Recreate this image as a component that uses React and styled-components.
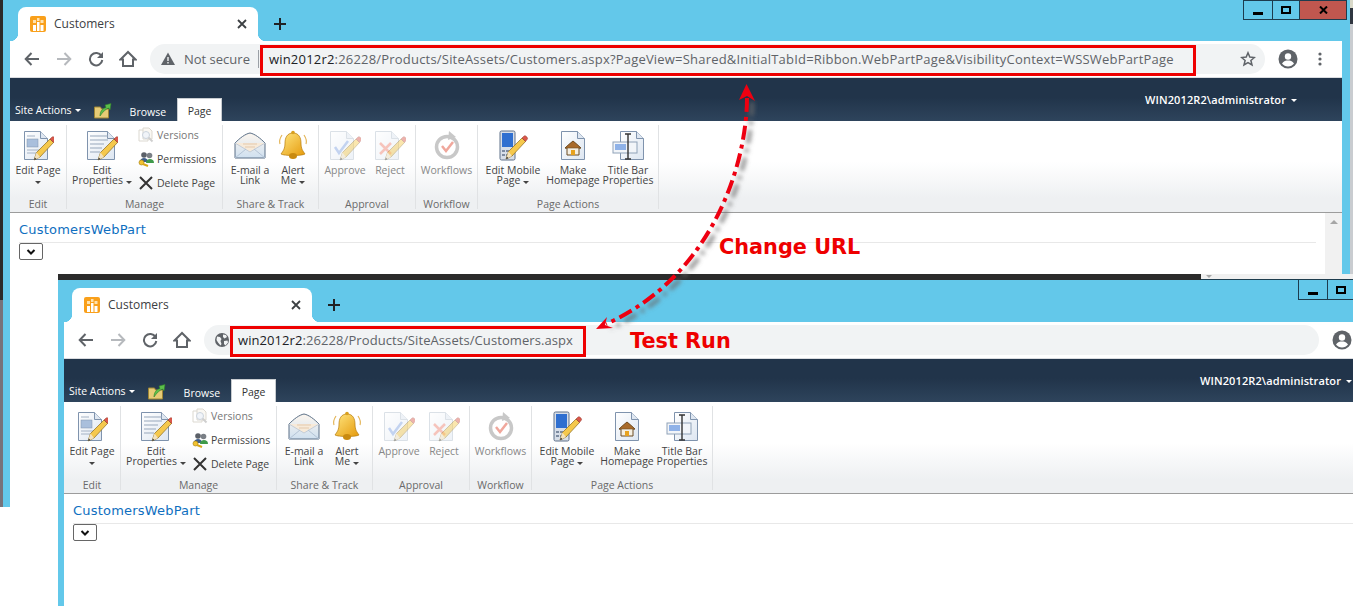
import React from 'react';
import styled, { createGlobalStyle } from 'styled-components';

const SKY = '#63c8ea';
const UI_FONT = '"Open Sans", "Noto Sans", sans-serif';

const GlobalStyle = createGlobalStyle`
  html, body {
    margin: 0;
    padding: 0;
    background: #fff;
    overflow: hidden;
  }
`;

// Desktop and windows.
const Desktop = styled.div`
  position: relative;
  width: 1353px;
  height: 614px;
  overflow: hidden;
  background: #fff;
  font-family: ${UI_FONT};
`;

const LeftEdge = styled.div`
  position: absolute;
  left: 0;
  top: 0;
  width: 3px;
  height: 507px;
  background: linear-gradient(#2b2b2b 0 300px, #77727a 300px);
`;

const RightEdge = styled.div`
  position: absolute;
  left: 1350px;
  top: 0;
  width: 3px;
  height: 274px;
  background: linear-gradient(#d8d8c8 0 8px, #2f3640 8px 24px, #c9ccd0 24px);
`;

const Window = styled.section`
  position: absolute;
  left: ${(p) => p.$left}px;
  top: ${(p) => p.$top}px;
  width: 1347px;
  height: ${(p) => p.$height}px;
  box-sizing: border-box;
  overflow: hidden;
  background: ${SKY};
  padding: 0 8px 0 ${(p) => p.$edge}px;
  display: flex;
  flex-direction: column;
`;

const TopEdge = styled.div`
  flex: none;
  height: 6px;
  margin: 0 -8px 0 -6px;
  display: flex;
`;

const DarkEdge = styled.div`
  width: 1143px;
  background: #2b2b2b;
`;

const PaleEdge = styled.div`
  flex: 1;
  background: #f0f0f0;
  border-bottom: 1px solid #1d3c4e;
  box-sizing: border-box;
  padding: 1px 0 0 5px;
`;

const EdgeArrow = styled.i`
  display: block;
  width: 0;
  height: 0;
  border: 3px solid transparent;
  border-top: 3px solid #a8a8a8;
  border-bottom: 0;
`;

const Controls = styled.div`
  position: absolute;
  left: 1240px;
  top: ${(p) => p.$top}px;
  display: flex;
  height: 20px;
  box-sizing: border-box;
  border: 1px solid #1d3c4e;
  border-top-width: ${(p) => (p.$top ? 0 : 1)}px;
`;

const ControlButton = styled.div`
  width: ${(p) => p.$w}px;
  display: flex;
  align-items: center;
  justify-content: center;
  background: ${(p) => (p.$close ? '#c0574f' : SKY)};
  & + & {
    border-left: 1px solid #1d3c4e;
  }
`;

// Chrome tab strip.
const TabStrip = styled.div`
  flex: none;
  height: ${(p) => p.$height}px;
  display: flex;
  align-items: flex-end;
  padding-left: 8px;
`;

const Tab = styled.div`
  position: relative;
  width: 240px;
  height: 34px;
  box-sizing: border-box;
  padding: 0 11px 0 12px;
  background: #fff;
  border-radius: 8px 8px 0 0;
  display: flex;
  align-items: center;
  gap: 8px;
  &::before,
  &::after {
    content: '';
    position: absolute;
    bottom: 0;
    width: 8px;
    height: 8px;
  }
  &::before {
    left: -8px;
    background: radial-gradient(circle at 0 0, transparent 8px, #fff 8.5px);
  }
  &::after {
    right: -8px;
    background: radial-gradient(circle at 100% 0, transparent 8px, #fff 8.5px);
  }
`;

const TabTitle = styled.span`
  flex: 1;
  font-size: 12px;
  line-height: 15px;
  margin-top: -1px;
  color: #3c4043;
`;

const NewTab = styled.div`
  width: 20px;
  height: 34px;
  margin-left: 12px;
  display: flex;
  align-items: center;
  justify-content: center;
`;

// Address bar.
const Toolbar = styled.div`
  flex: none;
  height: 37px;
  box-sizing: border-box;
  background: #fff;
  border-bottom: 1px solid #dadce0;
  padding: 3px 0 3px 6px;
  display: flex;
  align-items: flex-start;
`;

const NavButton = styled.div`
  flex: none;
  width: ${(p) => p.$w || 32}px;
  height: 30px;
  display: flex;
  align-items: center;
  justify-content: center;
`;

const Omnibox = styled.div`
  flex: none;
  width: 1115px;
  height: 30px;
  margin-left: 6px;
  box-sizing: border-box;
  border-radius: 15px;
  background: #f1f3f4;
  display: flex;
  align-items: flex-start;
  padding-left: 11px;
`;

const SiteInfo = styled.div`
  flex: none;
  height: 30px;
  display: flex;
  align-items: center;
  gap: 9px;
  font-size: 13px;
  color: #5f6368;
`;

const SiteDivider = styled.span`
  width: 1px;
  height: 18px;
  background: #9aa0a6;
  margin-left: -1px;
`;

const UrlField = styled.div`
  flex: none;
  width: ${(p) => p.$w}px;
  height: 31px;
  margin: 1px 0 0 ${(p) => p.$gap}px;
  box-sizing: border-box;
  border: 3px solid #ee0000;
  padding: 0 0 3px ${(p) => p.$pad}px;
  display: flex;
  align-items: center;
  white-space: nowrap;
  font-size: 13px;
  letter-spacing: ${(p) => p.$track}px;
  color: #5f6368;
  b {
    font-weight: 400;
    color: #202124;
  }
`;

const StarSlot = styled.div`
  margin-left: auto;
  width: 34px;
  height: 30px;
  display: flex;
  align-items: center;
  justify-content: center;
`;

// SharePoint page.
const Band = styled.div`
  flex: none;
  height: 43px;
  background: linear-gradient(#21344a 0 45%, #2e445c);
  display: flex;
  align-items: flex-end;
  padding-left: 5px;
  color: #fff;
`;

const SiteActions = styled.div`
  font-size: 10.5px;
  height: 21px;
  line-height: 20px;
  display: flex;
  gap: 3px;
`;

const FolderSlot = styled.div`
  width: 18px;
  height: 18px;
  margin: 0 0 2px 13px;
`;

const BrowseTab = styled.div`
  margin-left: 18px;
  height: 16px;
  font-size: 10.5px;
  color: #fff;
`;

const PageTab = styled.div`
  width: 45px;
  height: 23px;
  margin-left: 11px;
  box-sizing: border-box;
  border: 1px solid #c8ccd0;
  border-bottom: 0;
  background: #fff;
  color: #333;
  font-size: 10.5px;
  line-height: 25px;
  text-align: center;
`;

const UserMenu = styled.div`
  align-self: flex-start;
  margin: 15px 45px 0 auto;
  font-size: 11px;
  font-weight: 600;
  letter-spacing: 0.1px;
  line-height: 14px;
  display: flex;
  gap: 5px;
`;

const Caret = styled.i`
  display: inline-block;
  flex: none;
  width: 0;
  height: 0;
  align-self: center;
  border: 3px solid transparent;
  border-top: 3px solid ${(p) => p.$color || '#444'};
  border-bottom: 0;
  margin-left: ${(p) => p.$gap || 0}px;
`;

const Ribbon = styled.div`
  flex: none;
  height: 92px;
  box-sizing: border-box;
  background: linear-gradient(#fff 0 45%, #eef0f2 85%);
  border-bottom: 1px solid #9c9c9c;
  display: flex;
`;

const Group = styled.div`
  flex: none;
  width: ${(p) => p.$w}px;
  height: 84px;
  margin-top: 4px;
  box-sizing: border-box;
  border-right: 1px solid #e0e2e4;
  display: flex;
  flex-direction: column;
`;

const GroupBody = styled.div`
  flex: 1;
  display: flex;
`;

const GroupLabel = styled.div`
  height: 12px;
  font-size: 10.5px;
  line-height: 14px;
  text-align: center;
  color: #6a6a6a;
`;

const LargeButton = styled.div`
  flex: none;
  width: ${(p) => p.$w}px;
  box-sizing: border-box;
  padding-top: 5px;
  display: flex;
  flex-direction: column;
  align-items: center;
  color: ${(p) => (p.$off ? '#888' : '#444')};
  font-size: 10.5px;
  line-height: 10px;
  text-align: center;
`;

const ButtonLabel = styled.div`
  margin-top: 3px;
  white-space: nowrap;
`;

const SmallColumn = styled.div`
  flex: 1;
  margin-top: -2px;
  display: flex;
  flex-direction: column;
`;

const SmallButton = styled.div`
  height: 24px;
  display: flex;
  align-items: center;
  gap: 3px;
  padding-left: 1px;
  font-size: 10.5px;
  color: ${(p) => (p.$off ? '#777' : '#444')};
`;

const Content = styled.div`
  flex: 1;
  display: flex;
  min-height: 0;
  background: #fff;
`;

const WebPart = styled.div`
  flex: 1;
  padding: 9px 9px 0;
`;

const WebPartTitle = styled.div`
  font-family: "DejaVu Sans", sans-serif;
  font-size: 13px;
  letter-spacing: 0.2px;
  line-height: 16px;
  height: 20px;
  color: #0f6fc0;
  border-bottom: 1px solid #e8e8e8;
`;

const SelectBox = styled.div`
  width: 24px;
  height: 17px;
  box-sizing: border-box;
  border: 1px solid #666;
  border-radius: 2px;
  display: flex;
  align-items: center;
  justify-content: center;
`;

const Scrollbar = styled.div`
  flex: none;
  width: 17px;
  background: #f1f1f1;
  display: flex;
  justify-content: center;
  padding-top: 7px;
  box-sizing: border-box;
`;

const ScrollArrow = styled.i`
  width: 0;
  height: 0;
  border: 4px solid transparent;
  border-bottom: 4px solid #a6a6a6;
  border-top: 0;
`;

// Annotations drawn on top of the screenshot.
const Overlay = styled.svg`
  position: absolute;
  left: 0;
  top: 0;
  pointer-events: none;
`;

const Callout = styled.div`
  position: absolute;
  left: ${(p) => p.$left}px;
  top: ${(p) => p.$top}px;
  font-family: "DejaVu Sans", sans-serif;
  font-weight: 700;
  font-size: 20.8px;
  line-height: 24px;
  color: #ee0000;
  white-space: nowrap;
`;

// Browser icons.
const Svg = ({ size = 16, children }) => (
  <svg width={size} height={size} viewBox={`0 0 ${size} ${size}`} fill="none">{children}</svg>
);

const Favicon = () => (
  <Svg size={16}>
    <rect width="16" height="16" rx="2" fill="#f9a01b" />
    <path d="M3 9h3v6H3zM7 6h2.500v9H7zM10.500 9h3v6h-3z" fill="#fff" />
    <path d="M3 4h3v3H3zM7 2h2.500v3H7zM10.500 4h3v3h-3z" fill="#ffe2ad" />
  </Svg>
);

const ArrowBack = ({ color = '#5f6368', flip }) => (
  <Svg size={16}>
    <path
      d={flip ? 'M1 8h13M8.500 2l5.800 6-5.800 6' : 'M15 8H2M7.500 2L1.700 8l5.800 6'}
      stroke={color}
      strokeWidth="2"
    />
  </Svg>
);

const Reload = () => (
  <Svg size={16}>
    <path d="M13.500 5A6.200 6.200 0 1 0 14.300 9" stroke="#5f6368" strokeWidth="2" />
    <path d="M15 1v6H9z" fill="#5f6368" />
  </Svg>
);

const HomeIcon = () => (
  <Svg size={18}>
    <path d="M9 2L1.500 9.500H4v6.500h10V9.500h2.500z" stroke="#5f6368" strokeWidth="2" strokeLinejoin="miter" />
  </Svg>
);

const WarningIcon = () => (
  <Svg size={14}>
    <path d="M7 0.500L14 13H0z" fill="#5f6368" />
    <path d="M6.300 5h1.400v4H6.300zM6.300 10h1.400v1.500H6.300z" fill="#f1f3f4" />
  </Svg>
);

const GlobeIcon = () => (
  <Svg size={14}>
    <circle cx="7" cy="7" r="7" fill="#5f6368" />
    <path d="M2 3.500l3 .5 1.500 2-1 2 1 3-1 1.500L3 9.500 1.500 7zM8 1.500l3 .5 1 2-2.500 1.500L8 4zM9 8l3.500-.5.500 2-2.500 3-1.500-1.500z" fill="#f1f3f4" />
  </Svg>
);

const StarIcon = () => (
  <Svg size={16}>
    <path d="M8 1.800l1.800 4.300 4.600.4-3.500 3 1.100 4.500L8 11.600l-4 2.400 1.100-4.500-3.500-3 4.600-.4z" stroke="#5f6368" strokeWidth="1.500" />
  </Svg>
);

const ProfileIcon = () => (
  <Svg size={20}>
    <circle cx="10" cy="10" r="9.500" fill="#5f6368" />
    <circle cx="10" cy="7.500" r="3.200" fill="#fff" />
    <path d="M4 14.500c1.500-2.500 4-3 6-3s4.500.5 6 3c-1.500 2-3.700 3-6 3s-4.500-1-6-3z" fill="#fff" />
  </Svg>
);

const DotsIcon = () => (
  <Svg size={16}>
    <circle cx="8" cy="3" r="1.600" fill="#5f6368" />
    <circle cx="8" cy="8" r="1.600" fill="#5f6368" />
    <circle cx="8" cy="13" r="1.600" fill="#5f6368" />
  </Svg>
);

const CrossIcon = () => (
  <Svg size={10}>
    <path d="M1 1l8 8M9 1L1 9" stroke="#3c4043" strokeWidth="1.800" />
  </Svg>
);

const PlusIcon = () => (
  <Svg size={14}>
    <path d="M7 1v12M1 7h12" stroke="#202124" strokeWidth="2" />
  </Svg>
);

const ChevronIcon = () => (
  <Svg size={10}>
    <path d="M1.500 3L5 6.500 8.500 3" stroke="#111" strokeWidth="2" />
  </Svg>
);

const MinimizeGlyph = () => (
  <svg width="10" height="10" viewBox="0 0 10 10"><rect y="7" width="10" height="3" fill="#000" /></svg>
);

const RestoreGlyph = () => (
  <svg width="10" height="8" viewBox="0 0 10 8"><rect x="1" y="1" width="8" height="6" fill="none" stroke="#000" strokeWidth="2" /></svg>
);

const CloseGlyph = () => (
  <svg width="9" height="8" viewBox="0 0 9 8"><path d="M1 0.500l7 7M8 0.500l-7 7" stroke="#000" strokeWidth="2" /></svg>
);

const FolderIcon = () => (
  <Svg size={18}>
    <path d="M0.500 6h6l1 2h7v9h-14z" fill="#e6cb76" stroke="#9c8435" />
    <path d="M6 15c0-5 2.500-7.500 6-8.500L11 4l6-1.500-1 6.500-1.500-2C12 8 9 10.500 6 15z" fill="#5cc04a" stroke="#2f7f2a" strokeWidth=".6" />
  </Svg>
);

// Ribbon icons.
const Pencil = ({ x = 0, y = 0, faded }) => (
  <g transform={`translate(${x} ${y})`} opacity={faded ? 0.45 : 1}>
    <path d="M3 27l2.500-7.500L19 6l3.500 3.500L9 24z" fill="#f5c84c" stroke="#8a6a1e" strokeWidth=".7" />
    <path d="M19 6l1.500-1.500c1-1 1.800-1 2.600-.2l.9.9c.8.8.8 1.600-.2 2.600L22.500 9.500z" fill="#d9574a" stroke="#8c3027" strokeWidth=".5" />
    <path d="M3 27l2.500-7.500L9 24z" fill="#f3e2bd" />
    <path d="M3 27l.8-2.500 1.700 1.700z" fill="#333" />
  </g>
);

const DocShape = ({ x = 0, w = 24, h = 28, faded }) => (
  <g opacity={faded ? 0.5 : 1}>
    <path
      d={`M${x + 0.5} 1.500h${w - 8}l7 7V${h + 1.500}h-${w - 1}z`}
      fill="url(#docFill)"
      stroke={faded ? '#b9c4d0' : '#7f93ad'}
    />
    <path d={`M${x + w - 7.500} 1.500v7h7`} fill="#dfe7f1" stroke={faded ? '#b9c4d0' : '#7f93ad'} />
  </g>
);

const Frame32 = ({ children }) => (
  <svg width="32" height="32" viewBox="0 0 32 32" fill="none">
    <defs>
      <linearGradient id="docFill" x1="0" y1="0" x2="1" y2="1">
        <stop offset="0" stopColor="#fff" />
        <stop offset="1" stopColor="#dde6f1" />
      </linearGradient>
      <linearGradient id="bellFill" x1="0" y1="0" x2="1" y2="1">
        <stop offset="0" stopColor="#ffe680" />
        <stop offset="1" stopColor="#e59a0c" />
      </linearGradient>
      <linearGradient id="mailFill" x1="0" y1="0" x2="0" y2="1">
        <stop offset="0" stopColor="#fdf6ee" />
        <stop offset="1" stopColor="#cfe0f0" />
      </linearGradient>
    </defs>
    {children}
  </svg>
);

const EditPageIcon = () => (
  <Frame32>
    <DocShape x={2} />
    <rect x="5" y="9" width="11" height="8" fill="#a9bfdc" stroke="#7f93ad" strokeWidth=".5" />
    <path d="M5 20h14M5 23h10M5 6h8" stroke="#a4b2c4" />
    <Pencil x={9} y={3} />
  </Frame32>
);

const EditPropertiesIcon = () => (
  <Frame32>
    <DocShape x={1} w={28} />
    <path d="M4 6h18M4 10h18M4 14h14M4 18h12M4 22h10" stroke="#97a7bb" />
    <Pencil x={9} y={3} />
  </Frame32>
);

const VersionsIcon = () => (
  <Svg size={16}>
    <g opacity=".4">
      <path d="M1 3h6l3 3v8H1z" fill="#fff" stroke="#a9a08c" />
      <path d="M5 1h6l3 3v8H5z" fill="#f5efe2" stroke="#a9a08c" />
      <circle cx="8" cy="8" r="3.500" fill="#dde6f1" stroke="#7f93ad" />
      <path d="M10.500 10.500l4 4" stroke="#888" strokeWidth="2" />
    </g>
  </Svg>
);

const PermissionsIcon = () => (
  <Svg size={16}>
    <circle cx="6" cy="4" r="2.800" fill="#5b6068" />
    <circle cx="11.500" cy="4.500" r="2.800" fill="#7a7f86" />
    <path d="M2 11c0-3 2-4 4-4s4 1 4 4z" fill="#3f5f8c" />
    <path d="M8 12c0-3 2-4 4-4s4 1 4 4z" fill="#3f9a4a" />
    <circle cx="3.500" cy="11.500" r="2.500" fill="#f2c230" stroke="#a07c10" strokeWidth=".6" />
    <path d="M5 13l5 2" stroke="#d9a718" strokeWidth="2" />
  </Svg>
);

const DeleteIcon = () => (
  <Svg size={16}>
    <path d="M2 2l12 12M14 2L2 14" stroke="#333" strokeWidth="2" />
  </Svg>
);

const MailIcon = () => (
  <Frame32>
    <path d="M1 13C6 8 11 4 16 3c5 1 10 5 15 10v15H1z" fill="url(#mailFill)" stroke="#5a6f86" />
    <path d="M1 13l15 9 15-9" fill="#f7ead9" stroke="#c4cdd8" />
    <path d="M1 28l11-9M31 28l-11-9" stroke="#b4c4d6" />
    <path d="M9 14h14M11 17h10" stroke="#e3c9ad" />
  </Frame32>
);

const BellIcon = () => (
  <Frame32>
    <path d="M16 3c-6 0-8 5-8 10 0 6-2 8-4 11 3 2 21 2 24 0-2-3-4-5-4-11 0-5-2-10-8-10z" fill="url(#bellFill)" stroke="#b57a0a" strokeWidth=".7" />
    <ellipse cx="16" cy="26" rx="4" ry="3" fill="#c98a10" />
    <circle cx="16" cy="2.500" r="1.800" fill="#d9a01e" />
    <path d="M5 5C3 8 2 11 3 14M27 5c2 3 3 6 2 9" stroke="#e4b65a" strokeWidth="1.200" />
  </Frame32>
);

const ApproveIcon = () => (
  <Frame32>
    <DocShape x={1} faded />
    <path d="M6 17l4 6 9-12" stroke="#c3d3f0" strokeWidth="2.500" />
    <Pencil x={8} y={3} faded />
  </Frame32>
);

const RejectIcon = () => (
  <Frame32>
    <DocShape x={1} faded />
    <path d="M6 13l11 11M17 13L6 24" stroke="#f6c4bc" strokeWidth="2.500" />
    <Pencil x={8} y={3} faded />
  </Frame32>
);

const WorkflowIcon = () => (
  <Frame32>
    <circle cx="16" cy="17" r="10.500" stroke="#c8c8c8" strokeWidth="3.500" />
    <path d="M18 1l7 6-8 3z" fill="#c8c8c8" />
    <path d="M11 16l4 5 7-9" stroke="#f0a79c" strokeWidth="2.500" />
  </Frame32>
);

const MobileIcon = () => (
  <Frame32>
    <rect x="3" y="1" width="15" height="29" rx="1.500" fill="#d7dee8" stroke="#5f7089" />
    <rect x="5" y="3" width="11" height="14" fill="#2f6fd0" />
    <path d="M5 20h3v2H5zM9 20h3v2H9zM13 20h3v2h-3zM5 24h3v2H5zM9 24h3v2H9zM13 24h3v2h-3z" fill="#7d8ba0" />
    <Pencil x={6} y={2} />
  </Frame32>
);

const HomepageIcon = () => (
  <Frame32>
    <DocShape x={4} />
    <path d="M16 11l-8 7h2v7h12v-7h2z" fill="#f5efe2" stroke="#6a4a22" />
    <path d="M16 11l-8 7h16z" fill="#a86a2a" stroke="#6a4a22" strokeWidth=".6" />
    <rect x="14" y="20" width="4" height="5" fill="#e8a21e" />
  </Frame32>
);

const TitleBarIcon = () => (
  <Frame32>
    <DocShape x={8} />
    <rect x="1" y="12" width="24" height="11" fill="#f2f5f9" stroke="#8fa2b8" />
    <rect x="3" y="14" width="11" height="6" fill="#8fb2e8" />
    <path d="M13 4h6M13 29h6M16 4v25" stroke="#333" strokeWidth="1.400" />
  </Frame32>
);

// Ribbon data.
const groups = [
  {
    label: 'Edit',
    width: 57,
    buttons: [{ Icon: EditPageIcon, width: 56, lines: ['Edit Page'], caretLine: true }],
  },
  {
    label: 'Manage',
    width: 156,
    buttons: [{ Icon: EditPropertiesIcon, width: 70, lines: ['Edit', 'Properties'], caret: true }],
    small: [
      { Icon: VersionsIcon, text: 'Versions', off: true },
      { Icon: PermissionsIcon, text: 'Permissions' },
      { Icon: DeleteIcon, text: 'Delete Page' },
    ],
  },
  {
    label: 'Share & Track',
    width: 96,
    buttons: [
      { Icon: MailIcon, width: 54, lines: ['E-mail a', 'Link'] },
      { Icon: BellIcon, width: 32, lines: ['Alert', 'Me'], caret: true },
    ],
  },
  {
    label: 'Approval',
    width: 97,
    buttons: [
      { Icon: ApproveIcon, width: 52, lines: ['Approve'], off: true },
      { Icon: RejectIcon, width: 38, lines: ['Reject'], off: true },
    ],
  },
  {
    label: 'Workflow',
    width: 62,
    buttons: [{ Icon: WorkflowIcon, width: 61, lines: ['Workflows'], off: true }],
  },
  {
    label: 'Page Actions',
    width: 181,
    buttons: [
      { Icon: MobileIcon, width: 70, lines: ['Edit Mobile', 'Page'], caret: true },
      { Icon: HomepageIcon, width: 50, lines: ['Make', 'Homepage'] },
      { Icon: TitleBarIcon, width: 60, lines: ['Title Bar', 'Properties'] },
    ],
  },
];

const RibbonBar = () => (
  <Ribbon>
    {groups.map((group) => (
      <Group key={group.label} $w={group.width}>
        <GroupBody>
          {group.buttons.map(({ Icon, width, lines, caret, caretLine, off }) => (
            <LargeButton key={lines.join()} $w={width} $off={off}>
              <Icon />
              <ButtonLabel>
                {lines.map((line, i) => (
                  <div key={line}>
                    {line}
                    {caret && i === lines.length - 1 && <Caret $gap={3} />}
                  </div>
                ))}
                {caretLine && <div><Caret /></div>}
              </ButtonLabel>
            </LargeButton>
          ))}
          {group.small && (
            <SmallColumn>
              {group.small.map(({ Icon, text, off }) => (
                <SmallButton key={text} $off={off}>
                  <Icon />
                  {text}
                </SmallButton>
              ))}
            </SmallColumn>
          )}
        </GroupBody>
        <GroupLabel>{group.label}</GroupLabel>
      </Group>
    ))}
  </Ribbon>
);

const Browser = ({ left, top, height, edge, stripHeight, second, url }) => (
  <Window $left={left} $top={top} $height={height} $edge={edge}>
    {second && (
      <TopEdge>
        <DarkEdge />
        <PaleEdge><EdgeArrow /></PaleEdge>
      </TopEdge>
    )}
    <Controls $top={second ? 6 : 0}>
      <ControlButton $w={28}><MinimizeGlyph /></ControlButton>
      <ControlButton $w={26}><RestoreGlyph /></ControlButton>
      <ControlButton $w={46} $close><CloseGlyph /></ControlButton>
    </Controls>
    <TabStrip $height={stripHeight}>
      <Tab>
        <Favicon />
        <TabTitle>Customers</TabTitle>
        <CrossIcon />
      </Tab>
      <NewTab><PlusIcon /></NewTab>
    </TabStrip>
    <Toolbar>
      <NavButton><ArrowBack /></NavButton>
      <NavButton><ArrowBack color="#b6b9bd" flip /></NavButton>
      <NavButton><Reload /></NavButton>
      <NavButton><HomeIcon /></NavButton>
      <Omnibox>
        <SiteInfo>
          {second ? <GlobeIcon /> : <WarningIcon />}
          {!second && 'Not secure'}
          {!second && <SiteDivider />}
        </SiteInfo>
        <UrlField $w={url.width} $gap={url.gap} $pad={url.pad} $track={url.track}>
          <b>win2012r2</b>
          {url.rest}
        </UrlField>
        {!second && <StarSlot><StarIcon /></StarSlot>}
      </Omnibox>
      <NavButton $w={46}><ProfileIcon /></NavButton>
      <NavButton $w={18}><DotsIcon /></NavButton>
    </Toolbar>
    <Band>
      <SiteActions>
        Site Actions
        <Caret $color="#fff" />
      </SiteActions>
      <FolderSlot><FolderIcon /></FolderSlot>
      <BrowseTab>Browse</BrowseTab>
      <PageTab>Page</PageTab>
      <UserMenu>
        WIN2012R2\administrator
        <Caret $color="#fff" />
      </UserMenu>
    </Band>
    <RibbonBar />
    <Content>
      <WebPart>
        <WebPartTitle>CustomersWebPart</WebPartTitle>
        <SelectBox><ChevronIcon /></SelectBox>
      </WebPart>
      {!second && <Scrollbar><ScrollArrow /></Scrollbar>}
    </Content>
  </Window>
);

const ARROW_PATH = 'M747 98C747 160 715 275 606 324';
const ARROW_DASH = '14 5 4 5';

const Annotations = () => (
  <>
    <Overlay width="1353" height="614" viewBox="0 0 1353 614">
      <defs>
        <filter id="soft" x="-20%" y="-20%" width="140%" height="140%">
          <feGaussianBlur stdDeviation="2" />
        </filter>
      </defs>
      <path
        d={ARROW_PATH}
        transform="translate(5 4)"
        stroke="#6b6b6b"
        strokeOpacity=".7"
        strokeWidth="4.500"
        strokeDasharray={ARROW_DASH}
        fill="none"
        filter="url(#soft)"
      />
      <path d={ARROW_PATH} stroke="#ee0011" strokeWidth="4" strokeDasharray={ARROW_DASH} fill="none" />
      <path d="M746.500 84L739 100l8-4 8 5z" fill="#ee0011" />
      <path d="M596 329l11-12-2 8 8 3z" fill="#ee0011" />
    </Overlay>
    <Callout $left={719} $top={235}>Change URL</Callout>
    <Callout $left={630} $top={329}>Test Run</Callout>
  </>
);

const App = () => (
  <Desktop>
    <GlobalStyle />
    <LeftEdge />
    <RightEdge />
    <Browser
      left={3}
      top={0}
      height={507}
      edge={7}
      stripHeight={41}
      url={{
        width: 936,
        gap: 1,
        pad: 6,
        track: 0.2,
        rest: ':26228/Products/SiteAssets/Customers.aspx?PageView=Shared&InitialTabId=Ribbon.WebPartPage&VisibilityContext=WSSWebPartPage',
      }}
    />
    <Browser
      second
      left={58}
      top={274}
      height={332}
      edge={6}
      stripHeight={42}
      url={{
        width: 356,
        gap: 1,
        pad: 5,
        track: 0.08,
        rest: ':26228/Products/SiteAssets/Customers.aspx',
      }}
    />
    <Annotations />
  </Desktop>
);

export default App;
